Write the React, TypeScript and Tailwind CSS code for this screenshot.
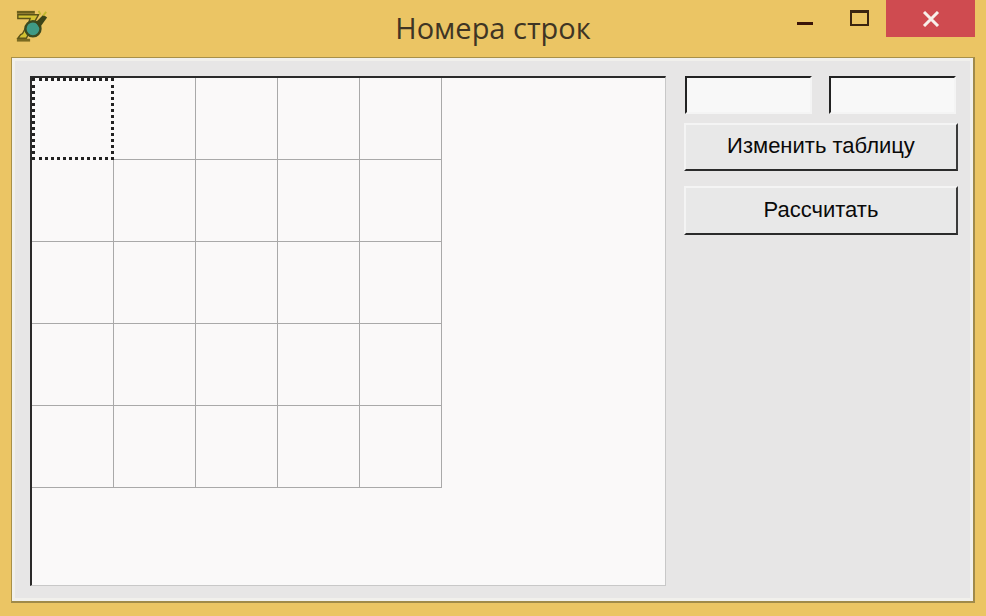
const rows = [0, 1, 2, 3, 4]
const cols = [0, 1, 2, 3, 4]

function AppIcon() {
  return (
    <svg width="34" height="34" viewBox="0 0 36 36" className="shrink-0">
      <path d="M2 2h19v3H2z" fill="#6b5f1c" />
      <path d="M3 6h22l-4 7-9 18H3l3-4 2-1 7-13 1-3H3z" fill="#d3c232" stroke="#5a5218" strokeWidth="1.5" />
      <path d="M2 33h14" stroke="#7a6a20" strokeWidth="3" />
      <circle cx="19" cy="21" r="8" fill="#3f9a85" stroke="#3c4a20" strokeWidth="2.5" />
      <path d="M22 14l8-8 4 3-8 11z" fill="#3d4418" />
      <path d="M25 2l2 4M33 3l-3 4" stroke="#c2b82e" strokeWidth="2" />
    </svg>
  )
}

function TextBox() {
  return (
    <div className="h-[38px] w-[127px] border-t-2 border-l-2 border-r-2 border-b-2 border-t-[#222222] border-l-[#222222] border-r-[#f4f4f4] border-b-[#f4f4f4] bg-[#f8f8f8]" />
  )
}

function PushButton({ label, tall }: { label: string; tall?: boolean }) {
  return (
    <button
      className={
        tall
          ? "flex h-[49px] w-[274px] items-center justify-center border-2 border-t-[#f4f4f4] border-l-[#f4f4f4] border-r-[#3a3a3a] border-b-[#2b2b2b] bg-[#e8e8e8] pb-[3px] font-['Liberation_Sans',sans-serif] text-[22px] text-[#0a0a0a]"
          : "flex h-[48px] w-[274px] items-center justify-center border-2 border-t-[#f4f4f4] border-l-[#f4f4f4] border-r-[#3a3a3a] border-b-[#2b2b2b] bg-[#e8e8e8] pb-[3px] font-['Liberation_Sans',sans-serif] text-[22px] text-[#0a0a0a]"
      }
    >
      {label}
    </button>
  )
}

export default function App() {
  return (
    <div className="flex h-[616px] w-[986px] flex-col overflow-hidden bg-[#ebc564]">
      {/* Title bar */}
      <div className="grid h-[57px] shrink-0 grid-cols-[1fr_auto_1fr] items-start">
        <div className="ml-[15px] mt-[9px]">
          <AppIcon />
        </div>
        <div className="pt-[8px] text-center font-['Open_Sans',sans-serif] text-[29px] leading-[40px] text-[#3f3524]">
          Номера строк
        </div>
        <div className="mr-[11px] flex items-start justify-end">
          <div className="mt-[22px] h-[3px] w-[16px] bg-[#3a1408]" />
          <div className="ml-[37px] mt-[10px] h-[16px] w-[19px] border-2 border-t-[3px] border-[#3a2410]" />
          <div className="ml-[17px] flex h-[37px] w-[89px] items-center justify-center bg-[#cf4b50]">
            <svg width="18" height="16" viewBox="0 0 18 16">
              <path d="M2 1l14 14M16 1L2 15" stroke="#f8f0ea" strokeWidth="3" />
            </svg>
          </div>
        </div>
      </div>

      {/* Client area */}
      <div className="mx-[11px] flex h-[546px] gap-[18px] border-t border-l border-t-[#a89048] border-l-[#a89048] border-r-2 border-b-2 border-r-[#a08a4a] border-b-[#a08a4a] bg-[#e7e6e6] pl-[18px] pt-[18px] shadow-[inset_0_0_0_3px_#f1f0ec]">
        {/* String grid */}
        <div className="h-[510px] w-[636px] shrink-0 border-t-2 border-l-2 border-t-[#2a2a2a] border-l-[#2a2a2a] border-r border-b border-r-[#c8c8c8] border-b-[#c8c8c8] bg-[#faf9f9]">
          {rows.map((r) => (
            <div key={r} className="flex">
              {cols.map((c) => (
                <div
                  key={c}
                  className={
                    r === 0 && c === 0
                      ? "h-[82px] w-[82px] border-[3px] border-dotted border-[#222222]"
                      : "h-[82px] w-[82px] border-r border-b border-[#a9a9a9]"
                  }
                />
              ))}
            </div>
          ))}
        </div>

        {/* Right panel */}
        <div className="flex flex-col">
          <div className="flex gap-[17px] pl-px">
            <TextBox />
            <TextBox />
          </div>
          <div className="mt-[9px] flex flex-col gap-[15px]">
            <PushButton label="Изменить таблицу" />
            <PushButton label="Рассчитать" tall />
          </div>
        </div>
      </div>
    </div>
  )
}
